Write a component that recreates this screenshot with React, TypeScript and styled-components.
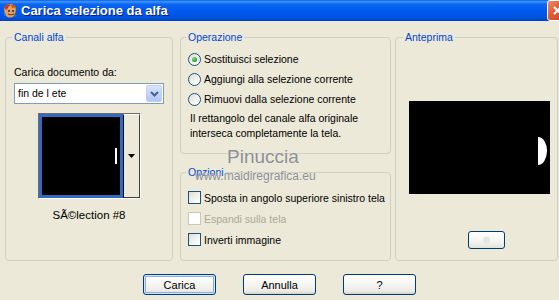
import React from 'react';
import styled, { createGlobalStyle } from 'styled-components';

const GlobalStyle = createGlobalStyle`
    html, body {
        margin: 0;
        padding: 0;
        background: #ece9d8;
    }
    body {
        font-family: 'Liberation Sans', Arial, sans-serif;
        font-size: 10.5px;
        color: #000;
    }
`;

const Window = styled.div`
    position: relative;
    width: 559px;
    height: 300px;
    overflow: hidden;
    background: #ece9d8;
`;

const TitleBar = styled.div`
    display: flex;
    align-items: center;
    height: 21px;
    padding-left: 2px;
    overflow: hidden;
    background: linear-gradient(
        to bottom,
        #0a5ee8 0%,
        #3d95ff 8%,
        #0a66f0 20%,
        #0058ee 55%,
        #0053e0 85%,
        #0040c0 100%
    );
`;

const Title = styled.span`
    flex: 1;
    margin-left: 3px;
    color: #fff;
    font-weight: bold;
    font-size: 13px;
    text-shadow: 1px 1px 0 #0a1e8a;
    white-space: nowrap;
`;

const CloseButton = styled.div`
    display: flex;
    align-items: center;
    justify-content: center;
    flex: none;
    width: 19px;
    height: 19px;
    margin-right: -9px;
    border: 1px solid #fff;
    border-radius: 3px;
    background: linear-gradient(135deg, #f08a68 0%, #e05a34 45%, #c8421c 100%);
`;

const Body = styled.div`
    display: flex;
    flex-direction: column;
    padding: 10px 0 0 5px;
`;

const Groups = styled.div`
    display: flex;
    align-items: flex-start;
`;

const Column = styled.div`
    display: flex;
    flex-direction: column;
    gap: 12px;
    width: 211px;
    margin: 0 4px 0 7px;
`;

const Group = styled.fieldset<{ $width?: number; $height: number }>`
    box-sizing: border-box;
    width: ${(p) => (p.$width ? `${p.$width}px` : 'auto')};
    height: ${(p) => p.$height}px;
    margin: 0;
    padding: 0;
    min-width: 0;
    border: 1px solid #d0d0bf;
    border-radius: 4px;
`;

const Legend = styled.legend<{ $offset: number }>`
    margin-left: ${(p) => p.$offset}px;
    padding: 0 2px;
    line-height: 13px;
    color: #0046d5;
`;

const LeftContent = styled.div`
    display: flex;
    flex-direction: column;
    padding: 22px 0 0 8px;
`;

const Label = styled.div`
    line-height: 13px;
`;

const Combo = styled.div`
    display: flex;
    align-items: center;
    box-sizing: border-box;
    width: 150px;
    height: 21px;
    margin-top: 4px;
    padding: 1px;
    border: 1px solid #7f9db9;
    background: #fff;
`;

const ComboText = styled.span`
    flex: 1;
    padding-left: 2px;
    line-height: 17px;
`;

const ComboArrow = styled.div`
    display: flex;
    align-items: center;
    justify-content: center;
    box-sizing: border-box;
    width: 16px;
    height: 17px;
    border: 1px solid #bfd0f5;
    border-radius: 2px;
    background: linear-gradient(to bottom, #d8e4fd 0%, #c3d4fb 50%, #b1c6f6 100%);
`;

const Thumb = styled.div`
    display: flex;
    box-sizing: border-box;
    width: 103px;
    height: 86px;
    margin: 9px 0 0 24px;
    border-top: 1px solid #6f6d62;
    border-left: 1px solid #6f6d62;
    border-right: 1px solid #fff;
    border-bottom: 1px solid #fff;
`;

const ThumbCell = styled.div`
    box-sizing: border-box;
    width: 84px;
    height: 100%;
    border: 3px solid #316ac5;
    background: #000;
    display: flex;
    align-items: center;
    justify-content: flex-end;
`;

const ThumbTick = styled.div`
    width: 2px;
    height: 16px;
    margin-right: 3px;
    background: #fff;
`;

const ThumbDrop = styled.div`
    display: flex;
    align-items: center;
    justify-content: center;
    flex: 1;
    border-left: 1px solid #000;
    border-top: 1px solid #fff;
    border-right: 1px solid #404040;
    border-bottom: 1px solid #404040;
`;

const Caption = styled.div`
    margin-top: 10px;
    padding-right: 8px;
    text-align: center;
    font-size: 11.5px;
    line-height: 13px;
`;

const OptionList = styled.div<{ $top: number; $row: number }>`
    display: flex;
    flex-direction: column;
    padding: ${(p) => p.$top}px 0 0 7px;

    & > * {
        height: ${(p) => p.$row}px;
    }
`;

const OptionRow = styled.label<{ $disabled?: boolean }>`
    display: flex;
    align-items: center;
    gap: 3px;
    color: ${(p) => (p.$disabled ? '#aca899' : '#000')};
    white-space: nowrap;
`;

const Radio = styled.span<{ $checked?: boolean }>`
    position: relative;
    box-sizing: border-box;
    width: 13px;
    height: 13px;
    flex: none;
    border: 1px solid #1c5180;
    border-radius: 50%;
    background: linear-gradient(135deg, #dcdcd7 0%, #f4f4f0 60%, #fff 100%);

    &::after {
        content: '';
        display: ${(p) => (p.$checked ? 'block' : 'none')};
        position: absolute;
        left: 3px;
        top: 3px;
        width: 5px;
        height: 5px;
        border-radius: 50%;
        background: radial-gradient(circle at 35% 35%, #7be37b 0%, #21a121 70%, #1a8a1a 100%);
    }
`;

const Check = styled.span<{ $disabled?: boolean }>`
    box-sizing: border-box;
    width: 13px;
    height: 13px;
    flex: none;
    border: 1px solid ${(p) => (p.$disabled ? '#cac8bb' : '#1c5180')};
    background: ${(p) => (p.$disabled ? '#fff' : 'linear-gradient(135deg, #dcdcd7 0%, #f4f4f0 60%, #fff 100%)')};
`;

const Note = styled.p`
    margin: 2px 0 0 9px;
    line-height: 15px;
`;

const PreviewContent = styled.div`
    display: flex;
    flex-direction: column;
    align-items: flex-start;
    padding: 57px 0 0 13px;
`;

const SmallButton = styled.div`
    box-sizing: border-box;
    width: 37px;
    height: 18px;
    margin: 37px 0 0 59px;
    border: 1px solid #003c74;
    border-radius: 3px;
    background:
        radial-gradient(circle at 50% 50%, #e6e6e0 0 3px, transparent 4px),
        linear-gradient(to bottom, #fff 0%, #f4f4f0 60%, #e3e2d9 100%);
`;

const ButtonRow = styled.div`
    display: flex;
    justify-content: center;
    gap: 27px;
    margin: 13px 5px 0 0;
`;

const Button = styled.div<{ $default?: boolean }>`
    display: flex;
    align-items: center;
    justify-content: center;
    box-sizing: border-box;
    width: 73px;
    height: 21px;
    border: 1px solid #003c74;
    border-radius: 3px;
    font-size: 11px;
    background: linear-gradient(to bottom, #fff 0%, #f7f7f4 40%, #ecebe6 85%, #d6d0c5 100%);
    box-shadow: ${(p) => (p.$default ? 'inset 0 0 0 1px #cee7ff, inset 0 0 0 2px #89ade4' : 'none')};
`;

const Watermark = styled.div<{ $size: number }>`
    position: absolute;
    font-size: ${(p) => p.$size}px;
    color: #8e8e96;
    white-space: nowrap;
    text-shadow: 0 0 1px #f2f2f2;
    pointer-events: none;
`;

const AppIcon = () => (
    <svg width="16" height="16" viewBox="0 0 16 16">
        <path d="M3 3 Q8 -1 13 3 Q15 8 12 13 Q8 16 4 13 Q1 8 3 3 Z" fill="#e8a060" />
        <path d="M2 4 Q5 0 9 2 Q6 3 5 7 Q3 6 2 4 Z" fill="#c0392b" />
        <path d="M9 2 Q13 1 14 5 Q12 4 10 5 Z" fill="#d35400" />
        <circle cx="7" cy="8" r="1" fill="#2a2a2a" />
        <circle cx="11" cy="8" r="1" fill="#2a2a2a" />
        <path d="M6 11 Q9 13 12 11" stroke="#7a2a10" strokeWidth="1" fill="none" />
        <path d="M12 10 L15 13 L13 14 Z" fill="#2e8b57" />
        <path d="M1 9 L4 11 L2 13 Z" fill="#2f6fd0" />
    </svg>
);

const App = () => {
    return (
        <>
            <GlobalStyle />
            <Window>
                <TitleBar>
                    <AppIcon />
                    <Title>Carica selezione da alfa</Title>
                    <CloseButton>
                        <svg width="11" height="11" viewBox="0 0 11 11">
                            <path d="M2 2 L9 9 M9 2 L2 9" stroke="#fff" strokeWidth="2" />
                        </svg>
                    </CloseButton>
                </TitleBar>
                <Body>
                    <Groups>
                        <Group $width={168} $height={230}>
                            <Legend $offset={6}>Canali alfa</Legend>
                            <LeftContent>
                                <Label>Carica documento da:</Label>
                                <Combo>
                                    <ComboText>fin de l ete</ComboText>
                                    <ComboArrow>
                                        <svg width="9" height="6" viewBox="0 0 9 6">
                                            <path d="M1 1 L4.5 4.5 L8 1" stroke="#4d6185" strokeWidth="2" fill="none" />
                                        </svg>
                                    </ComboArrow>
                                </Combo>
                                <Thumb>
                                    <ThumbCell>
                                        <ThumbTick />
                                    </ThumbCell>
                                    <ThumbDrop>
                                        <svg width="7" height="4" viewBox="0 0 7 4">
                                            <path d="M0 0 H7 L3.5 4 Z" fill="#000" />
                                        </svg>
                                    </ThumbDrop>
                                </Thumb>
                                <Caption>SÃ©lection #8</Caption>
                            </LeftContent>
                        </Group>
                        <Column>
                            <Group $height={123}>
                                <Legend $offset={5}>Operazione</Legend>
                                <OptionList $top={5} $row={20}>
                                    <OptionRow>
                                        <Radio $checked />
                                        Sostituisci selezione
                                    </OptionRow>
                                    <OptionRow>
                                        <Radio />
                                        Aggiungi alla selezione corrente
                                    </OptionRow>
                                    <OptionRow>
                                        <Radio />
                                        Rimuovi dalla selezione corrente
                                    </OptionRow>
                                </OptionList>
                                <Note>
                                    Il rettangolo del canale alfa originale
                                    <br />
                                    interseca completamente la tela.
                                </Note>
                            </Group>
                            <Group $height={95}>
                                <Legend $offset={5}>Opzioni</Legend>
                                <OptionList $top={8} $row={21}>
                                    <OptionRow>
                                        <Check />
                                        Sposta in angolo superiore sinistro tela
                                    </OptionRow>
                                    <OptionRow $disabled>
                                        <Check $disabled />
                                        Espandi sulla tela
                                    </OptionRow>
                                    <OptionRow>
                                        <Check />
                                        Inverti immagine
                                    </OptionRow>
                                </OptionList>
                            </Group>
                        </Column>
                        <Group $width={163} $height={230}>
                            <Legend $offset={7}>Anteprima</Legend>
                            <PreviewContent>
                                <svg width="141" height="93" viewBox="0 0 141 93">
                                    <rect width="141" height="93" fill="#000" />
                                    <path d="M129 36 A9 14 0 0 1 129 64 Z" fill="#fff" />
                                </svg>
                                <SmallButton />
                            </PreviewContent>
                        </Group>
                    </Groups>
                    <ButtonRow>
                        <Button $default>Carica</Button>
                        <Button>Annulla</Button>
                        <Button>?</Button>
                    </ButtonRow>
                </Body>
                <Watermark $size={19} style={{ left: 227, top: 146 }}>
                    Pinuccia
                </Watermark>
                <Watermark $size={12} style={{ left: 195, top: 169 }}>
                    www.maidiregrafica.eu
                </Watermark>
            </Window>
        </>
    );
};

export default App;
